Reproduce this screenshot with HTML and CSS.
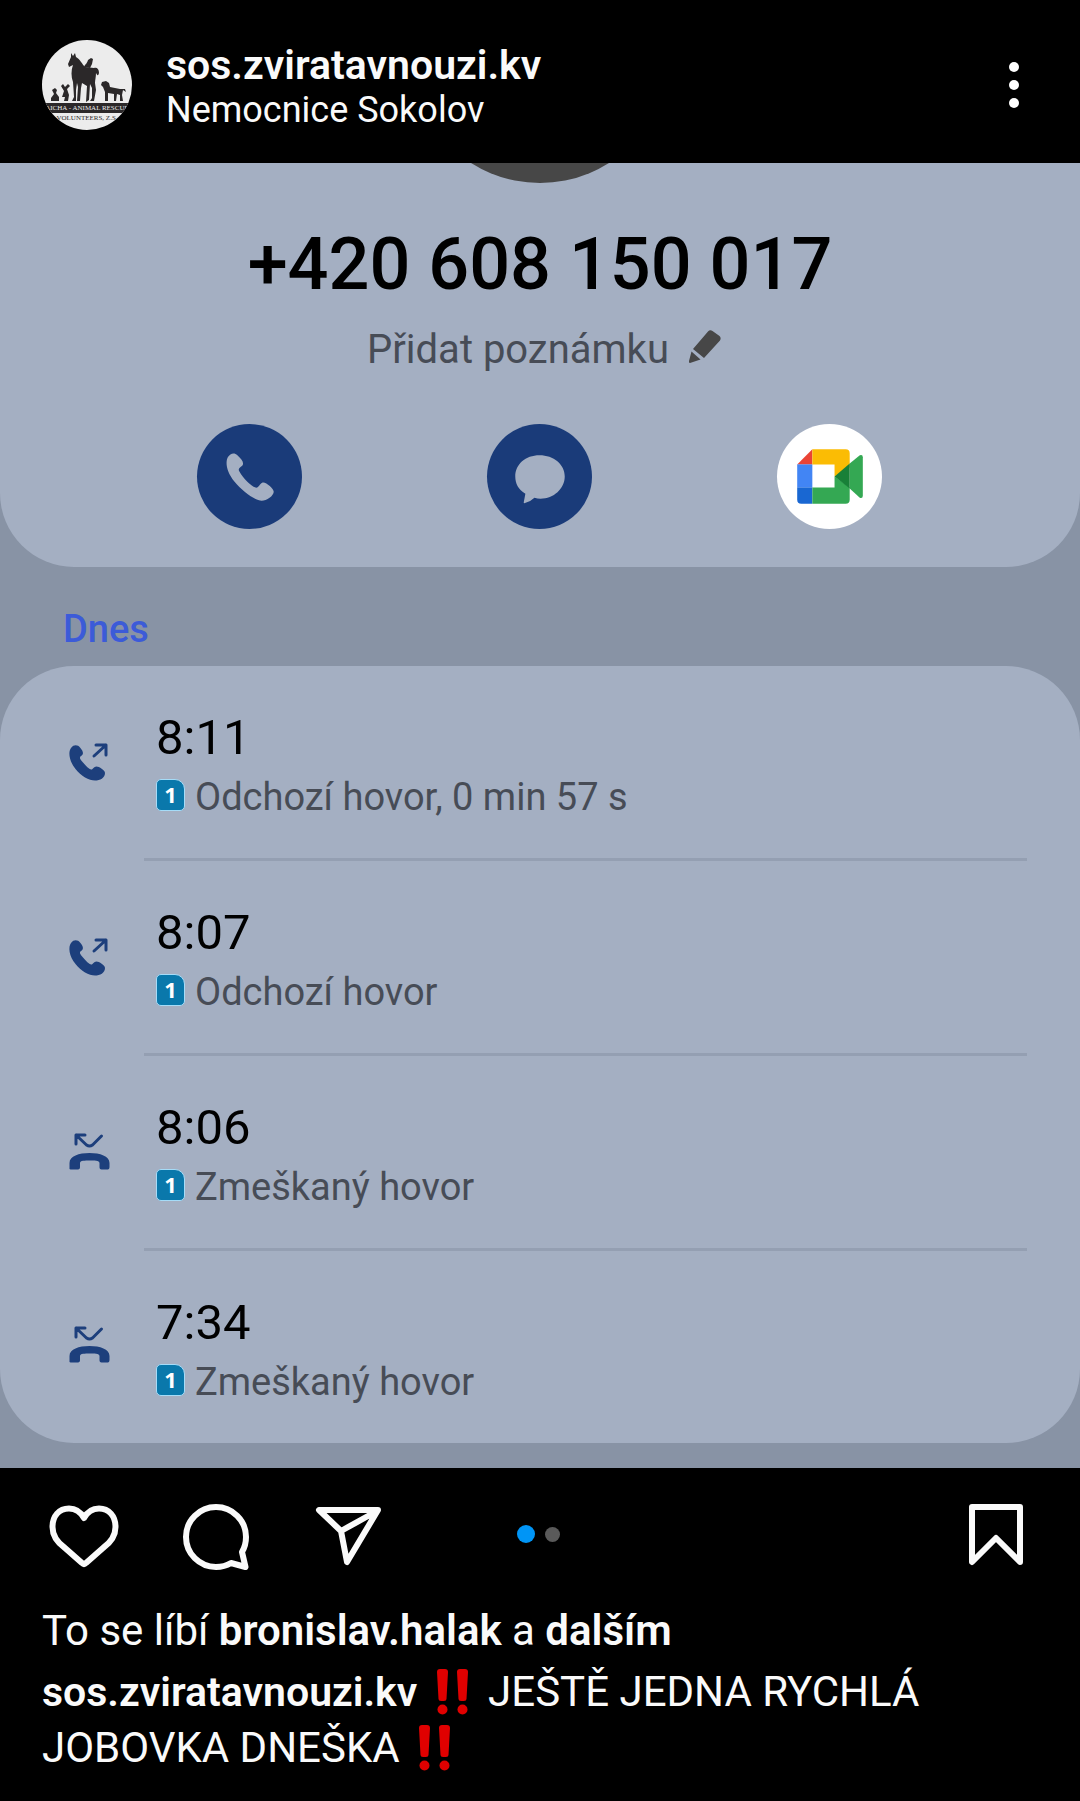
FILE: index.html
```html
<!DOCTYPE html>
<html lang="cs">
<head>
<meta charset="utf-8">
<meta name="viewport" content="width=device-width, initial-scale=1">
<title>sos.zviratavnouzi.kv</title>
<link rel="stylesheet" href="styles.css">
</head>
<body>
<svg class="sprite" aria-hidden="true">
  <symbol id="outgoing" viewBox="0 0 48 48">
    <path fill="currentColor" d="M5 8C8 4 12 5 14 7.500C18 12 17.500 14.500 15 16C13 17.500 14 19 17 22.500C20 26 23 29 25 29.500C27 30 27.500 26.500 30.500 26.500C33 26.500 39 30 39 33C39 38 34 40.500 29 40.500C23 40.500 15 36 9.500 29C3 21 2 12 5 8Z"/>
    <path fill="none" stroke="currentColor" stroke-width="3" stroke-linecap="round" stroke-linejoin="round" d="M28 16L40 5M30 5H40V15"/>
  </symbol>
  <symbol id="missed" viewBox="0 0 48 48">
    <path fill="currentColor" d="M3.500 39V33C3.500 26 13 23 23.500 23S43.500 26 43.500 33V37C43.500 39 42.500 39.500 41 39.500H35.500C34 39.500 33.500 38.500 33.500 37V33C33.500 30.500 28 30.500 23.500 30.500S14 30.500 14 33V37C14 38.500 13.500 39.500 12 39.500H5.500C4 39.500 3.500 39 3.500 39Z"/>
    <path fill="none" stroke="currentColor" stroke-width="3" stroke-linecap="round" stroke-linejoin="round" d="M10 14V5H19M10 5L20.500 15Q23.500 17 26.500 15L35.500 6"/>
  </symbol>
  <symbol id="bangs" viewBox="0 0 32 46">
    <path fill="#e00000" d="M0 3Q0 0 3 0H8Q11 0 11 3L9.500 30Q9.500 32 7 32H4Q1.500 32 1.500 30ZM20 3Q20 0 23 0H28Q31 0 31 3L29.500 30Q29.500 32 27 32H24Q21.500 32 21.500 30Z"/>
    <circle cx="5.500" cy="40.500" r="5" fill="#e00000"/><circle cx="25.500" cy="40.500" r="5" fill="#e00000"/>
  </symbol>
</svg>

<article class="post">
  <header class="post-header">
    <svg class="avatar" viewBox="0 0 90 90" role="img" aria-label="Aicha - Animal Rescue Volunteers">
      <clipPath id="disc"><circle cx="45" cy="45" r="45"/></clipPath>
      <g clip-path="url(#disc)">
        <rect width="90" height="90" fill="#ececec"/>
        <g fill="#2b2829">
          <path d="M29 13L31 16L33 13L34 17C38 19 40 24 43 27L52 28C55 27 57 29 57 33C56 37 55 35 54 33C54 37 53 40 53 43L54 50L52 61H48L50 58L50 48L48 44L47 60L44 62L45 46L40 43L39 48L38 61H35L36 47L35 43L34 50V61H30L32 57L31 42C29 37 29 30 31 25L27 27L26 24L29 17Z"/>
          <path d="M42 27C43 24 45 24 46 20L49 18L51 19L50 24L48 28Z"/>
          <path d="M10 50L13 48L15 50L14 53L17 57L17 61H9L9 58L12 54Z"/>
          <path d="M19 46L21 44L23 47L26 44L28 46L25 49L27 55L26 61H22L23 57L20 57L22 51Z"/>
          <path d="M60 42L64 41L67 43L68 47L78 49L83 49L84 52L81 50L80 55L81 61H78L78 55L75 54L74 61H72L72 54L66 53L66 61H63L63 52L61 47L59 45Z"/>
          <rect y="63" width="90" height="10"/>
        </g>
        <text x="45" y="70" text-anchor="middle" class="crest crest-light">AICHA - ANIMAL RESCUE</text>
        <text x="45" y="80" text-anchor="middle" class="crest">VOLUNTEERS, Z.S.</text>
      </g>
    </svg>
    <div class="who">
      <a class="name" href="#">sos.zviratavnouzi.kv</a>
      <a class="place" href="#">Nemocnice Sokolov</a>
    </div>
    <button class="icon-button more" aria-label="Další možnosti">
      <svg width="12" height="48" viewBox="0 0 12 48" fill="#fff"><circle cx="6" cy="6" r="5"/><circle cx="6" cy="24" r="5"/><circle cx="6" cy="42" r="5"/></svg>
    </button>
  </header>

  <section class="media">
    <div class="card contact">
      <div class="portrait"></div>
      <h1 class="number">+420 608 150 017</h1>
      <button class="note">Přidat poznámku
        <svg width="36" height="36" viewBox="0 0 36 36" fill="#474747"><path d="M21 2.500Q23 .5 25.500 2L32.500 7Q34.500 9 33 11.500L17 29L6 20ZM4.500 22.500L13.500 30.500L3 34Q1.500 34 2 32Z"/></svg>
      </button>
      <div class="contact-actions">
        <button class="round" aria-label="Zavolat">
          <svg viewBox="0 0 104 104"><path fill="#a4afc2" d="M30.500 33C33 29 37 28 40 31C44 35 47 38 45 41C43 43 40 44 42 47C46 54 53 61 58 63C61 64 62 59 65 58C68 57 76 64 76 67C76 71 69 76 64 76C58 76 45 67 37 57C29 47 28 38 30.500 33Z"/></svg>
        </button>
        <button class="round" aria-label="Zpráva">
          <svg viewBox="0 0 104 104"><path fill="#a4afc2" d="M52 31C66 31 77 40 77 52S66 74 53 74Q50 74 47 73Q43 77 37 78.500Q36 78.500 36.500 77L38 69C31 65 28 59 28 52C28 40 38 31 52 31Z"/></svg>
        </button>
        <button class="round meet" aria-label="Google Meet">
          <svg viewBox="0 0 104 104">
            <path fill="#ea4335" d="M35 25V40H20Z"/><path fill="#4285f4" d="M20 40H35V63H20Z"/><path fill="#1967d2" d="M20 63H35V79H24Q20 79 20 75Z"/>
            <path fill="#fbbc04" d="M35 25H68Q72 25 72 29V43L57 52V40H35Z"/><path fill="#34a853" d="M35 63H57V52L72 63V75Q72 79 68 79H35Z"/>
            <path fill="#34a853" d="M72 39L82 31Q85 30 85 33V71Q85 74 82 73L72 64Z"/><path fill="#188038" d="M57 52L72 39V64Z"/>
          </svg>
        </button>
      </div>
    </div>
    <h2 class="day">Dnes</h2>
    <ul class="card calls">
      <li class="call">
        <svg class="call-icon"><use href="#outgoing"/></svg>
        <div class="call-body"><p class="time">8:11</p><p class="kind"><span class="sim">1</span>Odchozí hovor, 0 min 57 s</p></div>
      </li>
      <li class="call">
        <svg class="call-icon"><use href="#outgoing"/></svg>
        <div class="call-body"><p class="time">8:07</p><p class="kind"><span class="sim">1</span>Odchozí hovor</p></div>
      </li>
      <li class="call">
        <svg class="call-icon"><use href="#missed"/></svg>
        <div class="call-body"><p class="time">8:06</p><p class="kind"><span class="sim">1</span>Zmeškaný hovor</p></div>
      </li>
      <li class="call">
        <svg class="call-icon"><use href="#missed"/></svg>
        <div class="call-body"><p class="time">7:34</p><p class="kind"><span class="sim">1</span>Zmeškaný hovor</p></div>
      </li>
    </ul>
  </section>

  <div class="actions">
    <div class="action-group">
      <button class="icon-button" aria-label="To se mi líbí"><svg width="72" height="68" viewBox="0 0 72 68"><path d="M36 16C41 7 47 6.500 51 6.500C61 6.500 67.500 14 67.500 25C67.500 34 62 41 55 46L38 61Q36 63 34 61L17 46C10 41 4.500 34 4.500 25C4.500 14 11 6.500 21 6.500C25 6.500 31 7 36 16Z"/></svg></button>
      <button class="icon-button" aria-label="Komentář"><svg width="72" height="68" viewBox="0 0 72 68"><path d="M61 50C64 45 65 40 65 35A30 30 0 1 0 35 65C40 65 45 64 50 61L64.500 65Z"/></svg></button>
      <button class="icon-button" aria-label="Sdílet"><svg width="72" height="68" viewBox="0 0 72 68"><path d="M5 8H64L33 60L27 29ZM27 29L63 9"/></svg></button>
    </div>
    <div class="pager"><span class="dot dot-on"></span><span class="dot"></span></div>
    <button class="icon-button save" aria-label="Uložit"><svg width="60" height="68" viewBox="0 0 60 68"><path d="M4 5H52V60L28 36L4 60Z"/></svg></button>
  </div>

  <div class="text">
    <p class="likes">To se líbí <a href="#">bronislav.halak</a> a <a href="#">dalším</a></p>
    <p class="caption"><a class="author" href="#">sos.zviratavnouzi.kv</a> <svg class="bangs" role="img" aria-label="‼️"><use href="#bangs"/></svg> JEŠTĚ JEDNA RYCHLÁ JOBOVKA DNEŠKA <svg class="bangs" role="img" aria-label="‼️"><use href="#bangs"/></svg></p>
  </div>
</article>
</body>
</html>
```
FILE: styles.css
```css
* { box-sizing: border-box; }

body {
  margin: 0;
  background: #000;
  color: #fafafa;
  font-family: Roboto, "Noto Sans", sans-serif;
}

h1, h2, p, ul { margin: 0; padding: 0; }
ul { list-style: none; }
a { color: inherit; text-decoration: none; }
svg { display: block; }

button {
  margin: 0;
  padding: 0;
  border: 0;
  background: none;
  color: inherit;
  font: inherit;
}

.sprite { position: absolute; width: 0; height: 0; }

/* Header */
.post-header {
  display: flex;
  gap: 34px;
  padding: 40px 60px 33px 42px;
}
.avatar { width: 90px; height: 90px; }
.crest { font: 7px "Liberation Serif", serif; fill: #2b2829; }
.crest-light { fill: #ececec; }
.who {
  display: flex;
  flex: 1;
  flex-direction: column;
  gap: 3px;
  padding-top: 3px;
}
.name { font-size: 41px; font-weight: 600; line-height: 44px; }
.place { font-size: 36px; line-height: 40px; }
.more { align-self: center; }

/* Shared picture: phone call log */
.media {
  padding-bottom: 25px;
  background: #8893a5;
  color: #000;
}
.card { background: #a4afc2; }
.contact {
  display: flex;
  flex-direction: column;
  align-items: center;
  padding-bottom: 38px;
  border-radius: 0 0 74px 74px;
  overflow: hidden;
}
.portrait {
  width: 258px;
  height: 258px;
  margin-top: -238px;
  border-radius: 50%;
  background: #474747;
}
.number {
  margin-top: 40px;
  font-size: 72px;
  font-weight: 500;
  line-height: 84px;
}
.note {
  display: flex;
  align-items: center;
  gap: 18px;
  margin-top: 21px;
  padding-left: 10px;
  color: #474c56;
  font-size: 40px;
  line-height: 44px;
}
.note svg { margin-bottom: 6px; }
.contact-actions {
  display: grid;
  grid-template-columns: repeat(3, 1fr);
  justify-items: center;
  width: 100%;
  margin-top: 52px;
  padding: 0 106px 0 104px;
}
.round {
  width: 105px;
  height: 105px;
  border-radius: 50%;
  background: #1a3b79;
}
.meet { background: #fff; }

.day {
  padding: 40px 63px 15px;
  color: #3c5bd8;
  font-size: 38px;
  font-weight: 500;
  line-height: 44px;
}

.calls { border-radius: 74px; }
.call { display: flex; align-items: center; padding: 0 53px 0 66px; }
.call-icon { width: 48px; height: 48px; margin-right: 30px; color: #1d3f7c; }
.call-body {
  flex: 1;
  padding: 44px 0 39px 12px;
  border-bottom: 3px solid #949fb2;
}
.call:last-child .call-body { border-bottom: 0; }
.time { font-size: 49px; line-height: 56px; }
.kind {
  display: flex;
  align-items: center;
  gap: 10px;
  margin-top: 9px;
  color: #474c56;
  font-size: 38px;
  line-height: 44px;
}
.sim {
  width: 29px;
  height: 32px;
  margin-bottom: 4px;
  border: 1px solid #a5dcf8;
  border-radius: 5px 10px 5px 5px;
  background: #0a78ab;
  color: #fff;
  font: bold 22px/28px "Open Sans", sans-serif;
  text-align: center;
}

/* Action bar */
.actions {
  display: grid;
  grid-template-columns: 1fr auto 1fr;
  align-items: center;
  padding: 34px 52px 37px 48px;
}
.action-group { display: flex; gap: 61px; }
.actions .icon-button svg {
  fill: none;
  stroke: #fafafa;
  stroke-width: 6;
  stroke-linejoin: round;
}
.save { justify-self: end; }
.pager { display: flex; align-items: center; gap: 10px; padding-bottom: 4px; }
.dot { width: 15px; height: 15px; border-radius: 50%; background: #5a5a5a; }
.dot-on { width: 18px; height: 18px; background: #0095f6; }

/* Likes and caption */
.text { padding: 0 42px 24px; font-size: 42px; }
.likes { line-height: 48px; }
.likes a { font-weight: 600; }
.caption { max-width: 920px; margin-top: 9px; line-height: 55px; }
.author { font-size: 41px; font-weight: 600; }
.bangs {
  display: inline-block;
  width: 32px;
  height: 46px;
  margin: 0 9px;
  vertical-align: -9px;
}
```
